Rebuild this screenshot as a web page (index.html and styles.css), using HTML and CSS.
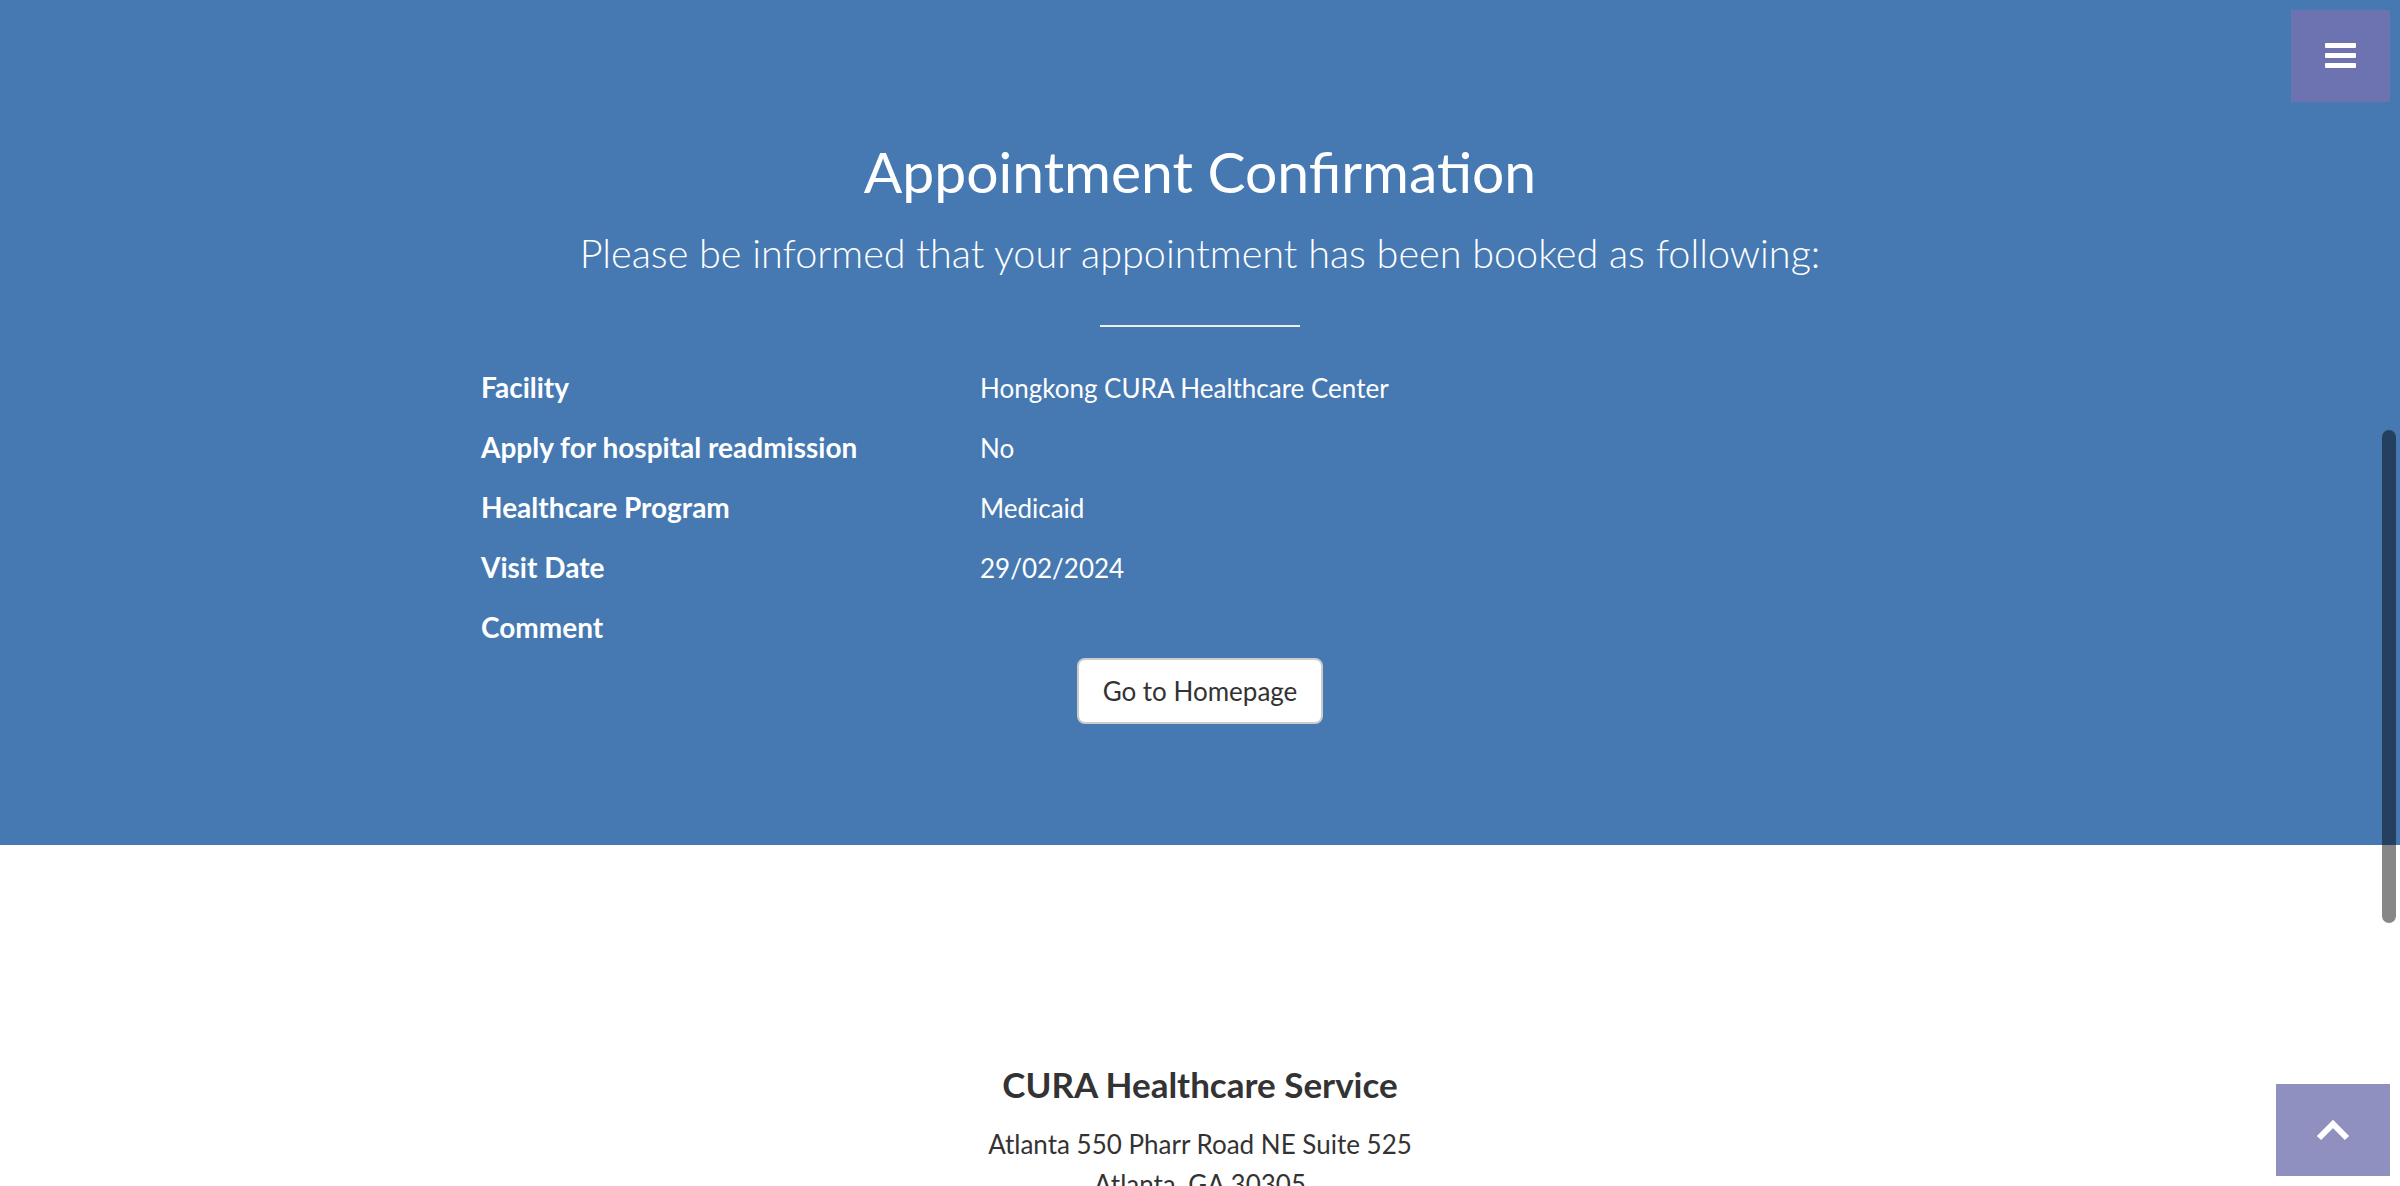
FILE: index.html
```html
<!DOCTYPE html>
<html lang="en">
<head>
<meta charset="utf-8">
<title>CURA Healthcare Service</title>
<link rel="stylesheet" href="styles.css">
</head>
<body>
<a class="menu-toggle" href="#" aria-label="Menu"><span class="bars"><i></i><i></i><i></i></span></a>

<section class="summary">
  <div class="summary-head">
    <h2>Appointment Confirmation</h2>
    <p class="lead">Please be informed that your appointment has been booked as following:</p>
    <hr class="small">
  </div>
  <div class="details">
    <div class="detail-row"><label>Facility</label><p>Hongkong CURA Healthcare Center</p></div>
    <div class="detail-row"><label>Apply for hospital readmission</label><p>No</p></div>
    <div class="detail-row"><label>Healthcare Program</label><p>Medicaid</p></div>
    <div class="detail-row"><label>Visit Date</label><p>29/02/2024</p></div>
    <div class="detail-row last"><label>Comment</label><p></p></div>
  </div>
  <div class="actions"><a class="btn" href="#">Go to Homepage</a></div>
</section>

<footer class="footer">
  <h4>CURA Healthcare Service</h4>
  <p>Atlanta 550 Pharr Road NE Suite 525<br>Atlanta, GA 30305</p>
  <ul class="contacts">
    <li>(678) 813-1KMS</li>
    <li>info@katalon.com</li>
  </ul>
</footer>

<a class="to-top" href="#" aria-label="Back to top">
  <svg width="34" height="22" viewBox="0 0 34 22"><polyline points="3,19 17,5 31,19" fill="none" stroke="#fff" stroke-width="6"/></svg>
</a>
<div class="scroll-thumb"></div>
</body>
</html>
```

FILE: styles.css
```css
html, body {
  margin: 0;
  padding: 0;
  overflow: hidden;
  height: 100%;
}
body {
  font-family: "Lato", "Liberation Sans", sans-serif;
  color: #333;
  background: #fff;
}

.summary {
  background: #4679b2;
  color: #fff;
  padding: 138px 0 121px;
}
.summary-head {
  text-align: center;
}
.summary-head h2 {
  margin: 0 0 20px;
  font-size: 57px;
  line-height: 66px;
  font-weight: 400;
}
.lead {
  margin: 0;
  font-size: 39.6px;
  line-height: 58px;
  font-weight: 300;
}
hr.small {
  width: 200px;
  margin: 43px auto 41px;
  border: 0;
  border-top: 2px solid #eee;
  height: 0;
}

.details {
  width: 1438px;
  margin: 0 auto;
}
.detail-row {
  display: grid;
  grid-template-columns: 499px 1fr;
  height: 60px;
  font-size: 26px;
  line-height: 40px;
}
.detail-row.last {
  height: 50px;
}
.detail-row label {
  font-weight: 700;
  font-size: 28px;
  line-height: 38px;
}
.detail-row p {
  margin: 0;
}

.actions {
  display: flex;
  justify-content: center;
}
.btn {
  display: inline-block;
  padding: 11px 24px;
  border: 2px solid #ccc;
  border-radius: 8px;
  background: #fff;
  color: #333;
  font-size: 26px;
  line-height: 40px;
  text-decoration: none;
}

.footer {
  padding-top: 200px;
  text-align: center;
  color: #333;
}
.footer h4 {
  margin: 19px 0 20px;
  font-size: 35px;
  line-height: 40px;
  font-weight: 700;
}
.footer p {
  margin: 0 0 20px;
  font-size: 26px;
  line-height: 40px;
}
.contacts {
  list-style: none;
  margin: 0;
  padding: 0;
  font-size: 26px;
  line-height: 40px;
}

.menu-toggle {
  position: fixed;
  top: 10px;
  right: 10px;
  width: 99px;
  height: 92px;
  background: #6d73b1;
  display: flex;
  align-items: center;
  justify-content: center;
}
.bars {
  display: flex;
  flex-direction: column;
  gap: 5px;
  margin-top: -2px;
}
.bars i {
  display: block;
  width: 31px;
  height: 5px;
  border-radius: 1px;
  background: #fff;
}

.to-top {
  position: fixed;
  right: 10px;
  bottom: 10px;
  width: 114px;
  height: 92px;
  background: #8f8fc0;
  display: flex;
  align-items: center;
  justify-content: center;
}

.scroll-thumb {
  position: fixed;
  left: 2382px;
  top: 430px;
  width: 14px;
  height: 493px;
  border-radius: 7px;
  background: rgba(0, 0, 0, 0.47);
}
```
